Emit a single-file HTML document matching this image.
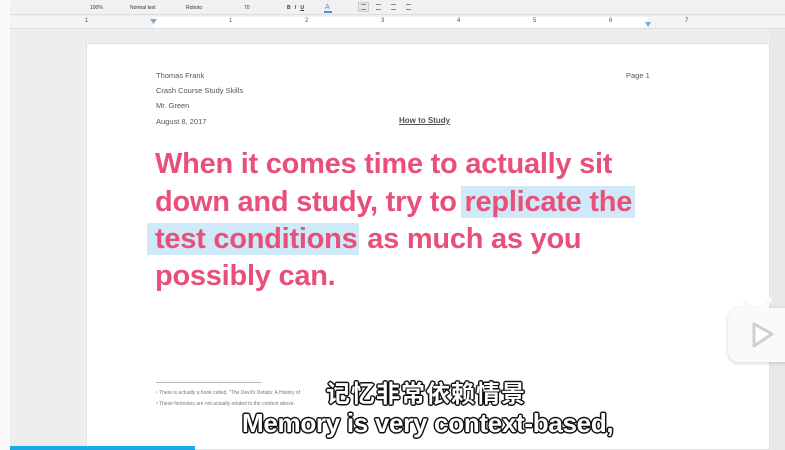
<!DOCTYPE html>
<html><head><meta charset="utf-8"><style>
*{margin:0;padding:0;box-sizing:border-box}
body{width:785px;height:450px;overflow:hidden;background:#eeeeee;position:relative;font-family:"Liberation Sans",Arial,sans-serif}
.a{position:absolute}
.tb{font-size:5px;color:#333;top:5px}
.sm{font-size:7.5px;color:#555}
.h{position:absolute;left:155px;font-size:29px;font-weight:bold;color:#e8507a;white-space:nowrap;line-height:32px;letter-spacing:-0.25px}
.hl{background:#cfe9f8}
.sub{position:absolute;white-space:nowrap;color:#fff;font-weight:bold;font-family:"Liberation Sans","Noto Sans CJK SC",sans-serif;
text-shadow:-1.5px 0 #111,1.5px 0 #111,0 -1.5px #111,0 1.5px #111,-1px -1px #111,1px 1px #111,-1px 1px #111,1px -1px #111}
</style></head><body>
<div class="a" style="left:0;top:0;width:10px;height:450px;background:#fafafa"></div>
<div class="a" style="left:10px;top:0;width:775px;height:15px;background:#f1f1f1;border-bottom:1px solid #ddd"></div>
<div class="a tb" style="left:90px">100%</div>
<div class="a tb" style="left:130px">Normal text</div>
<div class="a tb" style="left:186px">Roboto</div>
<div class="a tb" style="left:244px">70</div>
<div class="a tb" style="left:287px;font-weight:bold">B &nbsp; <i>I</i> &nbsp; <u>U</u></div>
<div class="a" style="left:325px;top:4px;font-size:7px;color:#4a90e2">A</div>
<div class="a" style="left:324px;top:11px;width:8px;height:1.5px;background:#4a90e2"></div>
<div class="a" style="left:358px;top:2px;width:11px;height:10px;border:1px solid #ccc;background:#e8e8e8"></div>
<div class="a" style="left:361px;top:4px;width:5px;height:6px;border-top:1px solid #888;border-bottom:1px solid #888"></div>
<div class="a" style="left:376px;top:4px;width:5px;height:6px;border-top:1px solid #888;border-bottom:1px solid #888"></div>
<div class="a" style="left:391px;top:4px;width:5px;height:6px;border-top:1px solid #888;border-bottom:1px solid #888"></div>
<div class="a" style="left:406px;top:4px;width:5px;height:6px;border-top:1px solid #888;border-bottom:1px solid #888"></div>
<div class="a" style="left:10px;top:16px;width:775px;height:13px;background:#f4f4f4;border-bottom:1px solid #ddd"></div>
<div class="a" style="left:153px;top:17px;width:495px;height:11px;background:#fff"></div>
<div class="a" style="left:85px;top:18px;font-size:6px;color:#555">1</div>
<div class="a" style="left:229px;top:18px;font-size:6px;color:#555">1</div>
<div class="a" style="left:305px;top:18px;font-size:6px;color:#555">2</div>
<div class="a" style="left:381px;top:18px;font-size:6px;color:#555">3</div>
<div class="a" style="left:457px;top:18px;font-size:6px;color:#555">4</div>
<div class="a" style="left:533px;top:18px;font-size:6px;color:#555">5</div>
<div class="a" style="left:609px;top:18px;font-size:6px;color:#555">6</div>
<div class="a" style="left:685px;top:18px;font-size:6px;color:#555">7</div>
<div class="a" style="left:150px;top:19px;width:7px;height:5px;background:#7aa9e0;clip-path:polygon(0 0,100% 0,50% 100%)"></div>
<div class="a" style="left:645px;top:22px;width:6px;height:5px;background:#7aa9e0;clip-path:polygon(0 0,100% 0,50% 100%)"></div>
<div class="a" style="left:86px;top:43px;width:684px;height:407px;background:#fff;border:1px solid #e2e2e2"></div>
<div class="a" style="left:770px;top:30px;width:15px;height:420px;background:#e9e9e9"></div>
<div class="a sm" style="left:156px;top:71px">Thomas Frank</div>
<div class="a sm" style="left:156px;top:86px">Crash Course Study Skills</div>
<div class="a sm" style="left:156px;top:101px">Mr. Green</div>
<div class="a sm" style="left:156px;top:117px">August 8, 2017</div>
<div class="a sm" style="left:626px;top:71px">Page 1</div>
<div class="a sm" style="left:399px;top:116px;font-weight:bold;text-decoration:underline;font-size:8px">How to Study</div>
<div class="h" style="top:148px">When it comes time to actually sit</div>
<div class="h" style="top:186px">down and study, try to <span class="hl" style="padding:0 3px 0 3px;margin-left:-3px">replicate the</span></div>
<div class="h" style="top:223px"><span class="hl" style="padding:0 2px 0 8px;margin-left:-8px">test conditions</span> as much as you</div>
<div class="h" style="top:260px">possibly can.</div>
<div class="a" style="left:156px;top:382px;width:106px;height:1px;background:#bbb"></div>
<div class="a" style="left:156px;top:390px;font-size:5px;color:#777">¹ There is actually a book called, "The Devil's Details: A History of</div>
<div class="a" style="left:156px;top:401px;font-size:5px;color:#777">² These footnotes are not actually related to the content above.</div>
<div class="sub" style="left:326px;top:374px;font-size:24px;letter-spacing:1px">记忆非常依赖情景</div>
<div class="sub" style="left:242px;top:408px;font-size:26px;letter-spacing:-0.3px">Memory is very context-based,</div>
<div class="a" style="left:728px;top:308px;width:70px;height:54px;border-radius:11px;background:#fafafa;box-shadow:0 1px 4px rgba(0,0,0,0.18)"></div>
<svg class="a" style="left:724px;top:296px" width="61" height="70" viewBox="0 0 61 70">
<path d="M20 6 L29 13 M46 4 L38 13" stroke="#fafafa" stroke-width="4" stroke-linecap="round"/>
<path d="M30 28 L48 38 L30 50 Z" fill="#fff" stroke="#d0d0d0" stroke-width="3" stroke-linejoin="round"/>
</svg>
<div class="a" style="left:10px;top:446px;width:185px;height:4px;background:#1aa8e8"></div>
</body></html>
